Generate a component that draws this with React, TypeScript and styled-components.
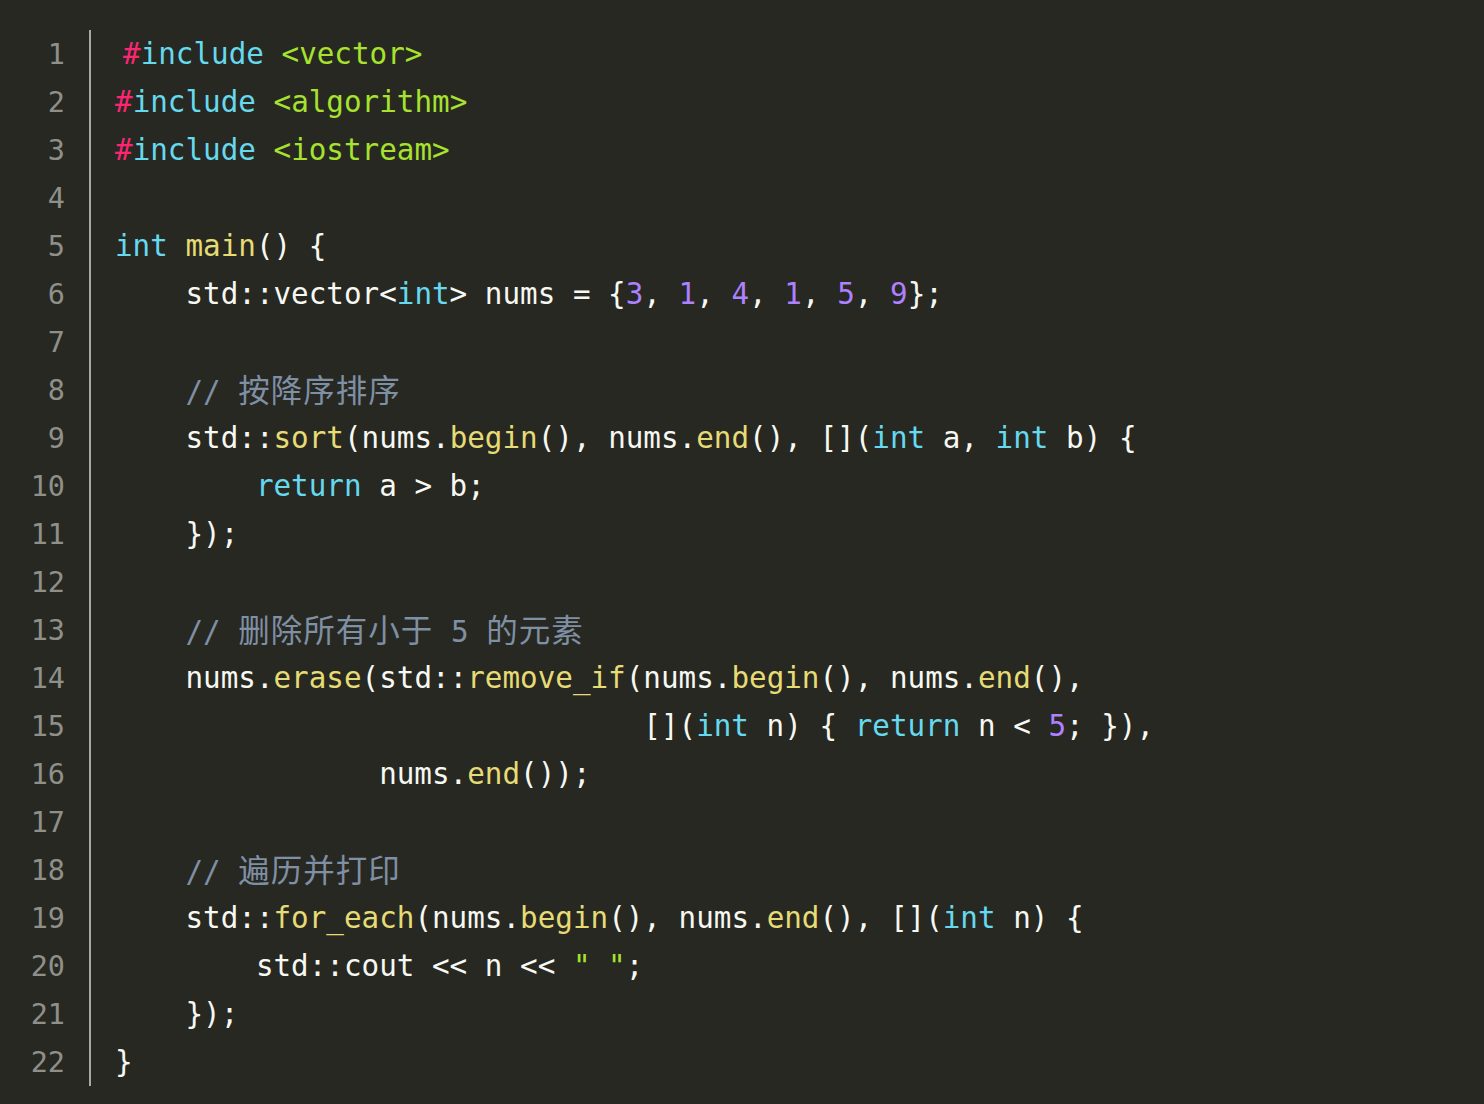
import React from "react";
import styled, { createGlobalStyle } from "styled-components";

const Global = createGlobalStyle`
  html, body {
    margin: 0;
    padding: 0;
    background: #272822;
  }
`;

type Kind = "p" | "k" | "h" | "s" | "f" | "n" | "c" | "z";
type Tok = [Kind, string];

const colors: Record<Kind, string> = {
  p: "#f8f8f2",
  k: "#66d9ef",
  h: "#f92672",
  s: "#a6e22e",
  f: "#e6db74",
  n: "#ae81ff",
  c: "#7f8fa4",
  z: "#7f8fa4",
};

const Page = styled.div`
  background: #272822;
  min-height: 1104px;
  padding-top: 30px;
  box-sizing: border-box;
`;

const Editor = styled.div`
  display: flex;
  align-items: stretch;
`;

const Gutter = styled.div`
  display: flex;
  flex-direction: column;
  width: 89px;
  box-sizing: border-box;
  padding-right: 24px;
  text-align: right;
`;

const LineNo = styled.div`
  font-family: "DejaVu Sans Mono", "Liberation Mono", monospace;
  font-size: 28.5px;
  line-height: 50px;
  height: 48px;
  color: #8f908a;
`;

const Code = styled.div`
  display: flex;
  flex-direction: column;
  border-left: 2px solid #a8a8a4;
  padding-left: 24px;
`;

const Line = styled.div<{ $shift?: number }>`
  font-family: "DejaVu Sans Mono", "Liberation Mono", monospace;
  font-size: 29.25px;
  line-height: 48px;
  height: 48px;
  white-space: pre;
  color: #f8f8f2;
  padding-left: ${(p) => p.$shift ?? 0}px;
`;

const Tk = styled.span<{ $kind: Kind }>`
  color: ${(p) => colors[p.$kind]};
`;

const Cjk = styled.span`
  font-family: "Noto Sans CJK SC", sans-serif;
  font-size: 31.5px;
  letter-spacing: 1px;
  line-height: 44px;
  color: #7f8fa4;
`;

const lines: { toks: Tok[]; shift?: number }[] = [
  { toks: [["h", "#"], ["k", "include"], ["p", " "], ["s", "<vector>"]], shift: 8 },
  { toks: [["h", "#"], ["k", "include"], ["p", " "], ["s", "<algorithm>"]] },
  { toks: [["h", "#"], ["k", "include"], ["p", " "], ["s", "<iostream>"]] },
  { toks: [] },
  { toks: [["k", "int"], ["p", " "], ["f", "main"], ["p", "() {"]] },
  {
    toks: [
      ["p", "    std::vector<"], ["k", "int"], ["p", "> nums = {"],
      ["n", "3"], ["p", ", "], ["n", "1"], ["p", ", "], ["n", "4"], ["p", ", "],
      ["n", "1"], ["p", ", "], ["n", "5"], ["p", ", "], ["n", "9"], ["p", "};"],
    ],
  },
  { toks: [] },
  { toks: [["c", "    // "], ["z", "按降序排序"]] },
  {
    toks: [
      ["p", "    std::"], ["f", "sort"], ["p", "(nums."], ["f", "begin"], ["p", "(), nums."],
      ["f", "end"], ["p", "(), []("], ["k", "int"], ["p", " a, "], ["k", "int"], ["p", " b) {"],
    ],
  },
  { toks: [["p", "        "], ["k", "return"], ["p", " a > b;"]] },
  { toks: [["p", "    });"]] },
  { toks: [] },
  { toks: [["c", "    // "], ["z", "删除所有小于"], ["c", " 5 "], ["z", "的元素"]] },
  {
    toks: [
      ["p", "    nums."], ["f", "erase"], ["p", "(std::"], ["f", "remove_if"], ["p", "(nums."],
      ["f", "begin"], ["p", "(), nums."], ["f", "end"], ["p", "(),"],
    ],
  },
  {
    toks: [
      ["p", "                              []("], ["k", "int"], ["p", " n) { "], ["k", "return"],
      ["p", " n < "], ["n", "5"], ["p", "; }),"],
    ],
  },
  { toks: [["p", "               nums."], ["f", "end"], ["p", "());"]] },
  { toks: [] },
  { toks: [["c", "    // "], ["z", "遍历并打印"]] },
  {
    toks: [
      ["p", "    std::"], ["f", "for_each"], ["p", "(nums."], ["f", "begin"], ["p", "(), nums."],
      ["f", "end"], ["p", "(), []("], ["k", "int"], ["p", " n) {"],
    ],
  },
  { toks: [["p", "        std::cout << n << "], ["s", "\" \""], ["p", ";"]] },
  { toks: [["p", "    });"]] },
  { toks: [["p", "}"]] },
];

export default function App() {
  return (
    <Page>
      <Global />
      <Editor>
        <Gutter>
          {lines.map((_, i) => (
            <LineNo key={i}>{i + 1}</LineNo>
          ))}
        </Gutter>
        <Code>
          {lines.map((l, i) => (
            <Line key={i} $shift={l.shift}>
              {l.toks.length === 0
                ? " "
                : l.toks.map(([k, t], j) =>
                    k === "z" ? (
                      <Cjk key={j}>{t}</Cjk>
                    ) : (
                      <Tk key={j} $kind={k}>
                        {t}
                      </Tk>
                    )
                  )}
            </Line>
          ))}
        </Code>
      </Editor>
    </Page>
  );
}
